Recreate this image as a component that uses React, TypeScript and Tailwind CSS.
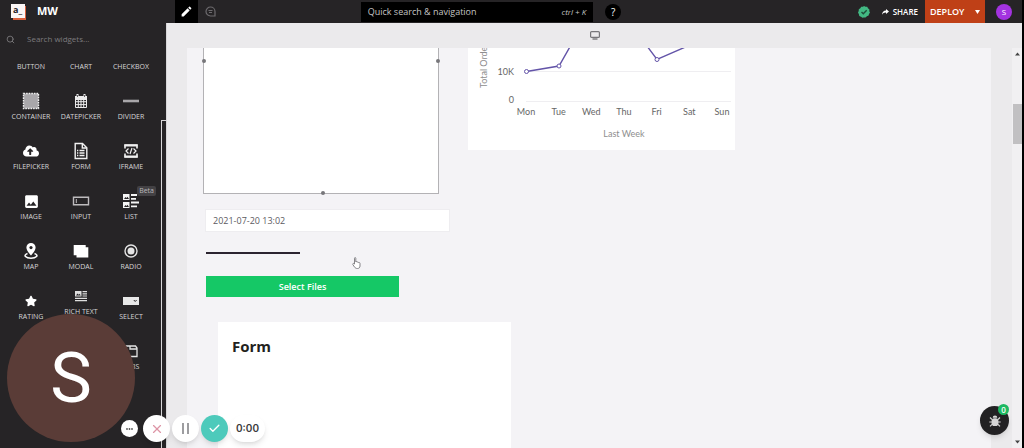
import type { ReactNode } from "react";
import { FaCloudUploadAlt, FaStar } from "react-icons/fa";
import { MdImage, MdModeEdit } from "react-icons/md";
import { Check, Search, X } from "lucide-react";

type Widget = { name: string; icon: ReactNode; beta?: boolean };

function ContainerIcon() {
  return (
    <svg width="18" height="18" viewBox="0 0 18 18">
      <rect x="1.5" y="1.5" width="15" height="15" fill="#a9a7aa" stroke="#f1f1f1" strokeWidth="1.4" strokeDasharray="1.6 1" />
    </svg>
  );
}

function DateIcon() {
  return (
    <svg width="18" height="18" viewBox="0 0 18 18">
      <path d="M3 4h12v4H3z" fill="#ececec" />
      <path d="M5.5 2v3.5M12.5 2v3.5" stroke="#ececec" strokeWidth="2" />
      <path d="M5.5 3v2M12.5 3v2" stroke="#262426" strokeWidth=".7" />
      <path d="M3.5 7h11v8.5h-11zM6.3 7v8.5M9 7v8.5M11.7 7v8.5M3.5 9.7h11M3.5 12.6h11" fill="none" stroke="#ececec" strokeWidth="1" />
    </svg>
  );
}

function DividerIcon() {
  return (
    <svg width="18" height="18" viewBox="0 0 18 18">
      <path d="M1 9h16" stroke="#a9a7aa" strokeWidth="2.6" />
    </svg>
  );
}

function FormIcon() {
  return (
    <svg width="18" height="18" viewBox="0 0 18 18" fill="none" stroke="#f1f1f1" strokeWidth="1.4">
      <path d="M3.2 1.5h7.3l4.3 4.3v10.7H3.2z" />
      <path d="M10.3 1.5v4.5h4.5M7.5 8.5h5M7.5 11h5M7.5 13.5h5M5 8.5h1.3M5 11h1.3M5 13.5h1.3" />
    </svg>
  );
}

function IframeIcon() {
  return (
    <svg width="18" height="18" viewBox="0 0 18 18" fill="none" stroke="#f1f1f1">
      <path d="M3 6.5V3h12v3.5M3 11.5V15h12v-3.5" strokeWidth="1.6" />
      <path d="M2.5 3.5h13M2.5 14.5h13" strokeWidth="2.2" />
      <path d="M6.5 6.5 4 9l2.5 2.5M11.5 6.5 14 9l-2.5 2.5M10 6l-2 6" strokeWidth="1.2" />
    </svg>
  );
}

function InputIcon() {
  return (
    <svg width="18" height="18" viewBox="0 0 18 18" fill="none" stroke="#bdbbbd">
      <path d="M1.5 5.2h15v7.6h-15z" strokeWidth="1.4" />
      <path d="M4.3 7v4" strokeWidth="1" />
    </svg>
  );
}

function ListIcon() {
  return (
    <svg width="18" height="18" viewBox="0 0 18 18">
      <path d="M1 2h6.5v6H1zM1 10h6.5v6H1zM9 2h6v2H9zM9 6h5v1.8H9zM9 9.5h8v2H9zM9 13.5h6v1.8H9z" fill="#f4f4f4" />
      <path d="m2 7 1.5-2 1 1 1-1.3L7 7zM2 15l1.5-2 1 1 1-1.3L7 15z" fill="#262426" />
    </svg>
  );
}

function MapIcon() {
  return (
    <svg width="18" height="18" viewBox="0 0 18 18">
      <path d="M9 1a4.6 4.6 0 0 0-4.6 4.6C4.4 9 9 13.5 9 13.5S13.6 9 13.6 5.6A4.6 4.6 0 0 0 9 1z" fill="#fff" />
      <circle cx="9" cy="5.6" r="1.6" fill="#262426" />
      <path d="M5.5 11.5c-5 2-1.5 4.7 3.5 4.7s8.5-2.7 3.5-4.7" fill="none" stroke="#fff" strokeWidth="1.5" />
    </svg>
  );
}

function ModalIcon() {
  return (
    <svg width="18" height="18" viewBox="0 0 18 18">
      <path d="M1.7 3h12v2.2h2.6V15.6H4.5v-2.3H1.7z" fill="#fff" />
    </svg>
  );
}

function RadioIcon() {
  return (
    <svg width="18" height="18" viewBox="0 0 18 18">
      <circle cx="9" cy="9" r="6" fill="none" stroke="#e4e4e4" strokeWidth="1.4" />
      <circle cx="9" cy="9" r="3.5" fill="#e4e4e4" />
    </svg>
  );
}

function RichTextIcon() {
  return (
    <svg width="18" height="18" viewBox="0 0 18 18">
      <path d="M3 4h6.5v5.5H3zM10.5 4H15v1.3h-4.5zM10.5 6.2H15v1.3h-4.5zM10.5 8.4H15v1.2h-4.5zM3 10.7h12V12H3zM3 13h12v1.3H3z" fill="#dedede" />
      <path d="m4 8.5 1.5-2 1.2 1.2 1-1 1 1.8z" fill="#262426" />
    </svg>
  );
}

function SelectIcon() {
  return (
    <svg width="18" height="18" viewBox="0 0 18 18">
      <path d="M1 5h16v8H1z" fill="#e8e8e8" />
      <path d="m11.8 8 1.4 1.5L14.6 8" fill="none" stroke="#262426" />
    </svg>
  );
}

function TabsIcon() {
  return (
    <svg width="18" height="18" viewBox="0 0 18 18" fill="none" stroke="#e4e4e4" strokeWidth="1.3">
      <path d="M3 4h10.5l1.500 2v8.500H3zM8 4v3h7" />
    </svg>
  );
}

function BugIcon() {
  return (
    <svg width="14" height="14" viewBox="0 0 14 14" fill="#d6d5d6" stroke="#d6d5d6">
      <path d="M4.7 3.8a2.3 2.3 0 0 1 4.6 0z" stroke="none" />
      <rect x="3.6" y="4.3" width="6.8" height="7.7" rx="2.8" stroke="none" />
      <path d="M2 3.5 4 5.5M12 3.5l-2 2M1.3 8h11.4M2 12.3l2-2M12 12.3l-2-2" fill="none" strokeWidth="1.2" />
    </svg>
  );
}

const widgets: Widget[] = [
  { name: "CONTAINER", icon: <ContainerIcon /> },
  { name: "DATEPICKER", icon: <DateIcon /> },
  { name: "DIVIDER", icon: <DividerIcon /> },
  { name: "FILEPICKER", icon: <FaCloudUploadAlt size={16} /> },
  { name: "FORM", icon: <FormIcon /> },
  { name: "IFRAME", icon: <IframeIcon /> },
  { name: "IMAGE", icon: <MdImage size={17} /> },
  { name: "INPUT", icon: <InputIcon /> },
  { name: "LIST", icon: <ListIcon />, beta: true },
  { name: "MAP", icon: <MapIcon /> },
  { name: "MODAL", icon: <ModalIcon /> },
  { name: "RADIO", icon: <RadioIcon /> },
  { name: "RATING", icon: <FaStar size={12} /> },
  { name: "RICH TEXT EDITOR", icon: <RichTextIcon /> },
  { name: "SELECT", icon: <SelectIcon /> },
];

const days = ["Mon", "Tue", "Wed", "Thu", "Fri", "Sat", "Sun"];

function Header() {
  return (
    <header className="grid h-[23px] shrink-0 grid-cols-[36fr_26fr_40fr] bg-[#262426] text-white">
      <div className="flex items-center">
        <div className="flex w-[175px] items-center gap-2.5 pl-[11px]">
          <svg width="16" height="16" viewBox="0 0 16 16">
            <path d="M2 2h13v14H2z" fill="#d9603c" />
            <path d="M0 0h14v14H0z" fill="#fbf6f5" />
            <text x="2" y="9" fontSize="9" fontWeight="700" fontFamily="Open Sans, sans-serif" fill="#262426">
              a_
            </text>
          </svg>
          <span className="text-[11px] font-bold">MW</span>
        </div>
        <button className="flex h-full w-[23px] items-center justify-center bg-black" aria-label="Edit">
          <MdModeEdit size={13} />
        </button>
        <button className="flex h-full w-6 items-center justify-center" aria-label="Comments">
          <svg width="11" height="11" viewBox="0 0 11 11" fill="none" stroke="#6d6b6e" strokeWidth="1.2">
            <path d="M10 10H5.5A4.5 4.5 0 1 1 10 5.5z" />
            <path d="M3.5 4.5h4M4 6.5h3" />
          </svg>
        </button>
      </div>
      <div className="flex items-center gap-3">
        <button className="flex h-5 flex-1 items-center justify-between bg-black px-[7px] text-[9px] text-[#c4c4c4]">
          <span>Quick search &amp; navigation</span>
          <span className="text-[8px] italic">ctrl + K</span>
        </button>
        <button className="size-4 rounded-full bg-black text-[10px] leading-4" aria-label="Help">
          ?
        </button>
      </div>
      <div className="flex items-center justify-end">
        <svg width="12" height="12" viewBox="0 0 12 12">
          <path d="m6 0 1.5.7 1.7 0 .8 1.5L11.4 3.5 11.3 5.2 12 6.5l-1 1.5-.4 1.6-1.7.6L7.5 11.6 6 11.5l-1.6.2L3 10.7l-1.7-.8L.9 8.2 0 6.5.7 5 .8 3.3 2.3 2.2 3.2.8 5 .8z" fill="#42b883" />
          <path d="m3.5 6 1.8 1.8L8.7 4.3" fill="none" stroke="#1f4d3a" strokeWidth="1.4" />
        </svg>
        <button className="flex h-full items-center gap-1 pr-[7px] pl-3 text-[8px] font-semibold">
          <svg width="7" height="6" viewBox="0 0 7 6">
            <path d="M4 0l3 2.5L4 5V3.5C2.3 3.4 1 4 0 5.8.2 3.2 1.5 1.6 4 1.5z" fill="#fff" />
          </svg>
          SHARE
        </button>
        <button className="flex h-full w-[60px] items-center justify-between bg-[#bf4017] px-[5px] text-[9px] font-semibold">
          DEPLOY
          <svg width="5" height="4" viewBox="0 0 5 4">
            <path d="M0 0h5L2.5 4z" fill="#fff" />
          </svg>
        </button>
        <button className="mr-2.5 ml-[11px] size-4 rounded-full bg-[#a333e0] text-[8px] leading-4">S</button>
      </div>
    </header>
  );
}

function Sidebar() {
  return (
    <aside className="flex w-[167px] shrink-0 border-r border-[#d8d7d9] bg-[#262426] text-[#d6d5d6]">
      <div className="flex flex-1 flex-col overflow-hidden">
        <label className="mb-[7px] flex h-8 shrink-0 items-center gap-3 pl-[6px]">
          <Search size={9} className="text-[#8a888b]" />
          <input
            className="w-28 text-[8px] outline-none placeholder:text-[#7d7b7e]"
            placeholder="Search widgets..."
            aria-label="Search widgets"
          />
        </label>
        <div className="grid grid-cols-3 pr-[5px] pl-[6px] text-center text-[7px] leading-[10px]">
          <span className="h-5">BUTTON</span>
          <span className="h-5">CHART</span>
          <span className="h-5">CHECKBOX</span>
          {widgets.map((w) => (
            <div key={w.name} className="relative flex min-h-[50px] flex-col items-center justify-center">
              <span className="flex size-[18px] items-center justify-center text-white">{w.icon}</span>
              <span className="mt-0.5">{w.name}</span>
              {w.beta && (
                <span className="absolute top-1 right-0 rounded-xs bg-[#434144] px-0.5 text-[#b9b8ba]">Beta</span>
              )}
            </div>
          ))}
          <div className="col-start-3 flex min-h-[50px] flex-col items-center justify-center">
            <TabsIcon />
            <span className="mt-0.5">TABS</span>
          </div>
        </div>
      </div>
      <div className="mt-[97px] w-[5px] border-t border-l border-[#d8d7d9]" />
    </aside>
  );
}

function OrdersChart() {
  return (
    <svg width="267" height="102" viewBox="0 0 267 102" className="bg-white" fontFamily="Lato, sans-serif">
      <path d="M58 23.5h205M58 53.5h205" stroke="#efeef1" />
      <path d="M58.5 23.5 91 18l16-28M173-10l16 21.5 33-14.5" fill="none" stroke="#6354a8" strokeWidth="1.4" />
      <g fill="#fff" stroke="#6354a8">
        <circle cx="58.5" cy="23.5" r="2" />
        <circle cx="91" cy="18" r="2" />
        <circle cx="189" cy="11.5" r="2" />
      </g>
      <g fontSize="9" fill="#666">
        <text x="46" y="27" textAnchor="end">10K</text>
        <text x="46" y="55" textAnchor="end">0</text>
        {days.map((day, i) => (
          <text key={day} x={58 + (i * 98) / 3} y="67" textAnchor="middle">
            {day}
          </text>
        ))}
        <g fill="#8e8e8e">
          <text x="156" y="89" textAnchor="middle">Last Week</text>
          <text transform="translate(19 40) rotate(-90)">Total Orde</text>
        </g>
      </g>
    </svg>
  );
}

function Canvas() {
  return (
    <div className="relative min-w-0 flex-1 overflow-hidden bg-[#f4f3f6] pl-4">
      <div className="flex items-start gap-[29px]">
        <div className="relative h-[146px] w-[236px] border-x border-b border-[#b3b2b5] bg-white">
          <span className="absolute top-[11px] -left-0.5 size-1 rounded-full bg-[#77767a]" />
          <span className="absolute top-[11px] -right-0.5 size-1 rounded-full bg-[#77767a]" />
          <span className="absolute -bottom-0.5 left-1/2 size-1 rounded-full bg-[#77767a]" />
        </div>
        <OrdersChart />
      </div>
      <div className="flex flex-col items-start pt-4 pl-[3px]">
        <input
          className="h-[21px] w-[243px] bg-white px-[7px] text-[9px] text-[#5c5b5f] outline-1 outline-[#eeedf0]"
          defaultValue="2021-07-20 13:02"
          aria-label="Date"
        />
        <hr className="mt-[21px] w-[94px] border-t-2 border-[#2b2430]" />
        <button className="mt-[22px] h-[21px] w-[193px] bg-[#15c866] text-[9px] font-semibold text-white">
          Select Files
        </button>
        <section className="mt-[25px] ml-3 h-40 w-[293px] bg-white px-3.5 pt-3">
          <h2 className="text-[15px] leading-6 font-bold text-[#231f20]">Form</h2>
        </section>
      </div>
      {/* pointer */}
      <svg className="absolute top-[209px] left-[165px]" width="9" height="12" viewBox="0 0 9 12">
        <path
          d="M2.5 7V1.3c0-1 1.3-1 1.3 0V5c.3-.6 1.3-.5 1.4.2.4-.5 1.2-.3 1.3.4.6-.4 1.5 0 1.5.8V9c0 1.5-1 2.5-2.5 2.5S3.3 11 2.500 10L.8 7.500c-.4-.8.6-1.500 1.200-.8z"
          fill="#fff"
          stroke="#77767a"
          strokeWidth=".9"
        />
      </svg>
    </div>
  );
}

function RecorderControls() {
  return (
    <div className="absolute bottom-[6px] left-[7px] flex items-end font-[Roboto,sans-serif]">
      <div className="flex size-32 items-center justify-center rounded-full bg-[#5a3c37] text-[70px] text-white">S</div>
      <div className="-ml-3.5 flex items-center gap-0.5">
        <button className="mr-[3px] flex size-[17px] items-center justify-center rounded-full bg-white" aria-label="More">
          <svg width="7" height="2" viewBox="0 0 7 2" fill="#555">
            <circle cx="1" cy="1" r=".9" />
            <circle cx="3.5" cy="1" r=".9" />
            <circle cx="6" cy="1" r=".9" />
          </svg>
        </button>
        <button className="flex size-[27px] items-center justify-center rounded-full bg-white shadow-md" aria-label="Cancel">
          <X size={14} strokeWidth={2} className="text-[#dd95a6]" />
        </button>
        <button className="flex size-[27px] items-center justify-center rounded-full bg-white shadow-md" aria-label="Pause">
          <svg width="7" height="11" viewBox="0 0 7 11" stroke="#858589" strokeWidth="1.6">
            <path d="M1 0v11M6 0v11" />
          </svg>
        </button>
        <button className="flex size-[27px] items-center justify-center rounded-full bg-[#4dcabb] shadow-md" aria-label="Finish">
          <Check size={13} strokeWidth={2.5} className="text-white" />
        </button>
        <span className="h-[27px] w-[35px] rounded-full bg-white text-center font-[Inter,sans-serif] text-[10px] leading-[27px] font-semibold text-[#3c3c40] shadow-md">
          0:00
        </span>
      </div>
    </div>
  );
}

export default function App() {
  return (
    <div className="relative flex h-screen flex-col overflow-hidden bg-black pr-0.5 font-['Open_Sans',sans-serif]">
      <Header />
      <div className="flex min-h-0 flex-1">
        <Sidebar />
        <main className="flex min-w-0 flex-1 flex-col bg-[#ebeaec]">
          <div className="flex h-[25px] shrink-0 items-center justify-center">
            <svg width="10" height="9" viewBox="0 0 10 9" fill="none" stroke="#77767a">
              <rect x=".6" y=".6" width="8.8" height="5.8" rx="1" strokeWidth="1.2" />
              <path d="M2.5 8h5" strokeWidth="1.4" />
            </svg>
          </div>
          <div className="flex min-h-0 flex-1 pl-5">
            <Canvas />
            <div className="ml-[21px] flex w-2.5 flex-col items-center bg-[#f1f0f2] py-1">
              <svg width="5" height="4" viewBox="0 0 5 4">
                <path d="M0 3.5h5L2.5.5z" fill="#444" />
              </svg>
              <div className="mt-12 h-10 w-[9px] bg-[#c1c0c2]" />
              <svg className="mt-auto" width="5" height="4" viewBox="0 0 5 4">
                <path d="M0 .5h5L2.5 3.5z" fill="#444" />
              </svg>
            </div>
          </div>
        </main>
      </div>
      <RecorderControls />
      <button
        className="absolute right-[15px] bottom-[13px] flex size-[29px] items-center justify-center rounded-full bg-[#222123] shadow-md"
        aria-label="Debug"
      >
        <BugIcon />
        <span className="absolute -top-0.5 right-0 size-[11px] rounded-full bg-[#1cb861] text-[8px] leading-[11px] font-semibold text-white">
          0
        </span>
      </button>
    </div>
  );
}
